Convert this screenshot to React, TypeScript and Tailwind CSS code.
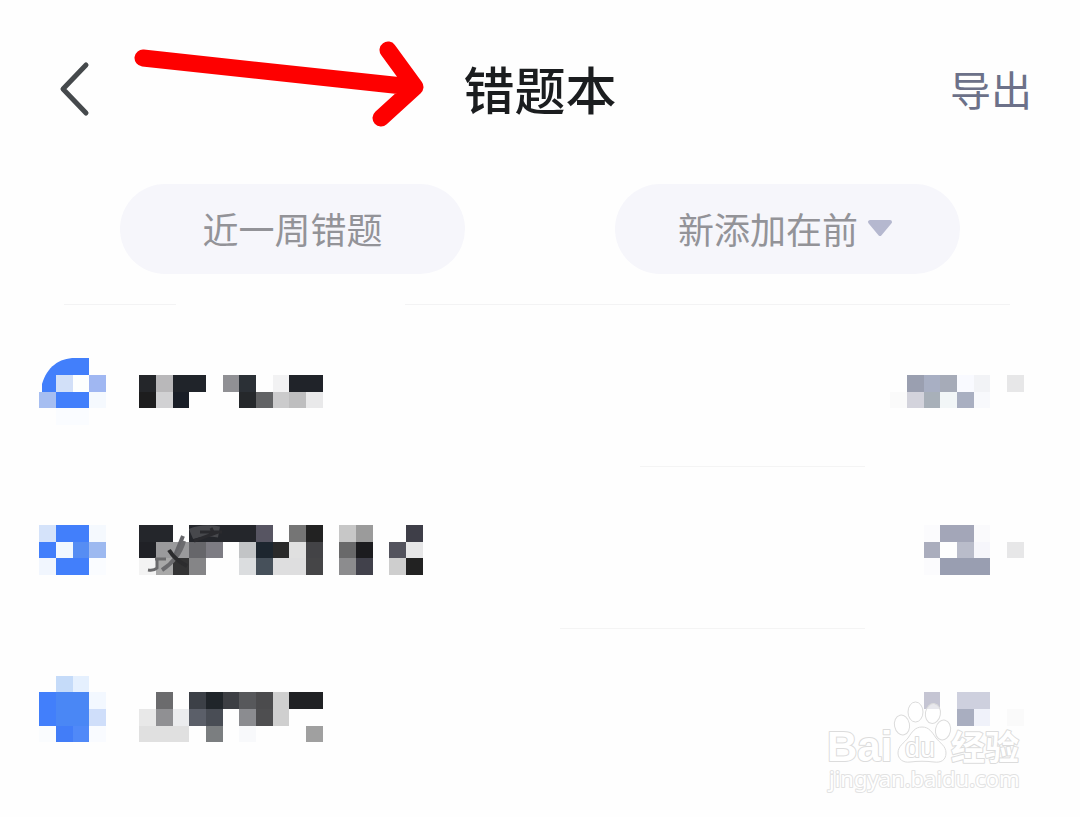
interface Block {
  x: number
  y: number
  w?: number
  h?: number
  color: string
}

interface Entry {
  id: string
  top: number
  divider?: string
  icon: Block[]
  name: Block[]
  count: Block[]
  smudge?: boolean
}

const CELL = 50 / 3

const entries: Entry[] = [
  {
    id: 'first',
    top: 22.3,
    divider: 'ml-[640px]',
    icon: [
      { x: 1, y: 1, color: '#d2e0f8' },
      { x: 2, y: 1, color: '#fdfffe' },
      { x: 3, y: 1, color: '#a0b7f2' },
      { x: 0, y: 2, color: '#a6bef1' },
      { x: 1, y: 2, w: 2, color: '#427ffb' },
      { x: 3, y: 2, color: '#f5f9fe' },
      { x: 1, y: 3, w: 2, color: '#fafcff' },
    ],
    name: [
      { x: 0, y: 1, color: '#24262a' },
      { x: 1, y: 1, color: '#b9b8ba' },
      { x: 2, y: 1, w: 2, color: '#20242a' },
      { x: 0, y: 2, color: '#1d1d1e' },
      { x: 1, y: 2, color: '#d1d1d3' },
      { x: 2, y: 2, color: '#191e27' },
      { x: 5, y: 1, color: '#909094' },
      { x: 6, y: 1, color: '#2b3036' },
      { x: 8, y: 1, color: '#f2f2f3' },
      { x: 9, y: 1, w: 2, color: '#202329' },
      { x: 6, y: 2, color: '#25282b' },
      { x: 7, y: 2, color: '#626365' },
      { x: 8, y: 2, color: '#cbcbcc' },
      { x: 9, y: 2, color: '#bebebf' },
      { x: 10, y: 2, color: '#e9e9ea' },
    ],
    count: [
      { x: 1, y: 1, color: '#9a9fb0' },
      { x: 2, y: 1, color: '#a8afc3' },
      { x: 3, y: 1, color: '#a6abb8' },
      { x: 4, y: 1, color: '#f9faff' },
      { x: 5, y: 1, color: '#f2f3f6' },
      { x: 7, y: 1, color: '#e7e7e8' },
      { x: 0, y: 2, color: '#fafafa' },
      { x: 1, y: 2, color: '#d3d3dc' },
      { x: 2, y: 2, color: '#a8b0b9' },
      { x: 3, y: 2, color: '#f2f6f7' },
      { x: 4, y: 2, color: '#a9afc1' },
      { x: 5, y: 2, color: '#f8f9fc' },
    ],
  },
  {
    id: 'second',
    top: 27,
    divider: 'ml-[560px]',
    smudge: true,
    icon: [
      { x: 0, y: 0, color: '#d5e3fa' },
      { x: 1, y: 0, w: 2, color: '#427ffb' },
      { x: 3, y: 0, color: '#f5f9fe' },
      { x: 0, y: 1, color: '#427ffb' },
      { x: 1, y: 1, color: '#f1f8ff' },
      { x: 2, y: 1, color: '#568df3' },
      { x: 3, y: 1, color: '#9db9f0' },
      { x: 0, y: 2, color: '#f1f6fe' },
      { x: 1, y: 2, w: 2, color: '#427ffb' },
      { x: 3, y: 2, color: '#fafcff' },
    ],
    name: [
      { x: 0, y: 0, w: 2, color: '#24262b' },
      { x: 3, y: 0, w: 4, color: '#24262b' },
      { x: 7, y: 0, color: '#575562' },
      { x: 9, y: 0, color: '#757575' },
      { x: 10, y: 0, color: '#222222' },
      { x: 0, y: 1, color: '#202126' },
      { x: 1, y: 1, w: 2, color: '#9a9a9c' },
      { x: 3, y: 1, color: '#66666a' },
      { x: 4, y: 1, color: '#7d7c83' },
      { x: 6, y: 1, color: '#c2c4c6' },
      { x: 7, y: 1, color: '#1d262f' },
      { x: 8, y: 1, color: '#2a2a2a' },
      { x: 9, y: 1, color: '#e0e0e0' },
      { x: 10, y: 1, color: '#434346' },
      { x: 0, y: 2, color: '#f3f3f3' },
      { x: 1, y: 2, color: '#a8a8a8' },
      { x: 2, y: 2, color: '#333334' },
      { x: 3, y: 2, color: '#858587' },
      { x: 6, y: 2, color: '#dbdddf' },
      { x: 7, y: 2, color: '#46505a' },
      { x: 8, y: 2, w: 2, color: '#dededf' },
      { x: 10, y: 2, color: '#454547' },
      { x: 12, y: 0, color: '#c7c7c7' },
      { x: 13, y: 0, color: '#9b9b9b' },
      { x: 16, y: 0, color: '#3e3e48' },
      { x: 12, y: 1, color: '#69696a' },
      { x: 13, y: 1, color: '#1c1c1f' },
      { x: 15, y: 1, color: '#53535d' },
      { x: 16, y: 1, color: '#e6e6e7' },
      { x: 12, y: 2, color: '#8c8c8e' },
      { x: 13, y: 2, color: '#41414b' },
      { x: 15, y: 2, color: '#cecece' },
      { x: 16, y: 2, color: '#222222' },
    ],
    count: [
      { x: 2, y: 0, color: '#fbfbfd' },
      { x: 3, y: 0, w: 2, color: '#a3a6b8' },
      { x: 5, y: 0, color: '#fafafc' },
      { x: 2, y: 1, color: '#aaadbd' },
      { x: 4, y: 1, color: '#b9bcca' },
      { x: 5, y: 1, color: '#f6f6fb' },
      { x: 7, y: 1, color: '#e7e7e8' },
      { x: 2, y: 2, color: '#fbfbfd' },
      { x: 3, y: 2, w: 3, color: '#999eb1' },
    ],
  },
  {
    id: 'third',
    top: 15.7,
    icon: [
      { x: 1, y: 0, color: '#c5dbf9' },
      { x: 2, y: 0, color: '#e5f0fe' },
      { x: 0, y: 1, color: '#427ffb' },
      { x: 1, y: 1, w: 2, color: '#4a87f5' },
      { x: 3, y: 1, color: '#f3f8ff' },
      { x: 0, y: 2, color: '#427ffb' },
      { x: 1, y: 2, w: 2, color: '#4a87f5' },
      { x: 3, y: 2, color: '#cfdefa' },
      { x: 0, y: 3, color: '#fafcfe' },
      { x: 1, y: 3, color: '#427df8' },
      { x: 2, y: 3, color: '#5089f8' },
      { x: 3, y: 3, color: '#f9fbff' },
    ],
    name: [
      { x: 1, y: 1, color: '#6b6b6d' },
      { x: 3, y: 1, color: '#3c4047' },
      { x: 4, y: 1, color: '#20252a' },
      { x: 5, y: 1, color: '#3d3f44' },
      { x: 6, y: 1, color: '#57585b' },
      { x: 7, y: 1, color: '#4b4b4d' },
      { x: 8, y: 1, h: 2, color: '#cfcfcf' },
      { x: 9, y: 1, w: 2, color: '#202124' },
      { x: 0, y: 2, color: '#e8e8e8' },
      { x: 1, y: 2, color: '#909093' },
      { x: 2, y: 2, color: '#ebecee' },
      { x: 3, y: 2, color: '#5b5f69' },
      { x: 4, y: 2, color: '#494d55' },
      { x: 6, y: 2, color: '#8b8c90' },
      { x: 7, y: 2, color: '#4e4e50' },
      { x: 0, y: 3, w: 3, color: '#e0e0e0' },
      { x: 4, y: 3, color: '#7b7e80' },
      { x: 6, y: 3, color: '#f8f9fb' },
      { x: 10, y: 3, color: '#a0a0a0' },
    ],
    count: [
      { x: 2, y: 1, color: '#c5c5d3' },
      { x: 4, y: 1, w: 2, color: '#ced0de' },
      { x: 4, y: 2, color: '#a9aec0' },
      { x: 5, y: 2, color: '#f0f2fa' },
      { x: 7, y: 2, color: '#fafafa' },
    ],
  },
]

function Blocks({ blocks, top }: { blocks: Block[]; top: number }) {
  return (
    <g shapeRendering="crispEdges" transform={`translate(0.3 ${top})`}>
      {blocks.map(({ x, y, w = 1, h = 1, color }) => (
        <rect
          key={`${x}-${y}`}
          x={x * CELL}
          y={y * CELL}
          width={w * CELL}
          height={h * CELL}
          fill={color}
        />
      ))}
    </g>
  )
}

function EntryRow({ entry }: { entry: Entry }) {
  return (
    <li>
      <div className="flex h-[161px] items-start pt-[31px] pr-14 pl-[39px]">
        <svg className="h-[100px] w-[100px] shrink-0" viewBox="0 0 100 100" aria-hidden="true">
          {entry.id === 'first' && (
            <path d="M3 56V48C8 31 20 22 36 22H50V56Z" fill="#427ffb" />
          )}
          <Blocks blocks={entry.icon} top={entry.top} />
        </svg>
        <svg className="h-[100px] w-[300px] shrink-0" viewBox="0 0 300 100" aria-hidden="true">
          <Blocks blocks={entry.name} top={entry.top} />
          {entry.smudge && (
            <g fill="none">
              <path d="M52 36q12-5 28-2" stroke="#6a6a6e" strokeWidth="11" opacity="0.5" />
              <path d="M55 43l24-9M72 30l3 6M61 34h22" stroke="#2a2a2e" strokeWidth="3" />
              <path d="M44 38l-9 22" stroke="#66666a" strokeWidth="4" />
              <path d="M45 43q-5 18-22 29" stroke="#6b6b6e" strokeWidth="4" />
              <path d="M30 52q6 10 18 16" stroke="#2c2c2e" strokeWidth="4" />
              <path d="M16 61h11M18 62v8q-3 3-9 2" stroke="#6a6a6c" strokeWidth="3" />
            </g>
          )}
        </svg>
        <svg className="ml-auto h-[100px] w-[134px] shrink-0" viewBox="0 0 134 100" aria-hidden="true">
          <Blocks blocks={entry.count} top={entry.top} />
        </svg>
      </div>
      {entry.divider && <div className={`mr-[215px] h-px bg-[#f4f4f4] ${entry.divider}`} />}
    </li>
  )
}

function Watermark() {
  return (
    <svg
      className="pointer-events-none absolute top-[695px] right-[50px] h-[105px] w-[210px]"
      viewBox="820 695 210 105"
      fill="#ffffff"
      stroke="#dcdcdc"
      strokeWidth="2"
      strokeLinejoin="round"
    >
      <g fillOpacity="0.6" strokeWidth="1">
        <ellipse cx="902" cy="725" rx="7.5" ry="10" transform="rotate(-12 902 725)" />
        <ellipse cx="915.5" cy="712" rx="7.5" ry="10" />
        <ellipse cx="933" cy="713.5" rx="7.5" ry="10" transform="rotate(10 933 713)" />
        <ellipse cx="943" cy="730" rx="7.5" ry="10" transform="rotate(12 943 730)" />
      </g>
      <path
        strokeWidth="1"
        d="M922 727c7 0 10 5 14 11 4 5 10 8 10 15 0 7-5 10-12 9-8-1-16-1-24 0-7 1-12-3-12-9 0-7 6-10 10-15 4-6 7-11 14-11z"
      />
      <g style={{ paintOrder: 'stroke' }}>
        <text x="827" y="761" className="font-['Liberation_Sans',sans-serif] text-[42px] font-bold">
          Bai
        </text>
        <text x="905" y="757" className="font-['Liberation_Sans',sans-serif] text-[27px]">
          du
        </text>
        <text
          x="951"
          y="760"
          className="font-['Noto_Sans_CJK_SC',sans-serif] text-[34px] font-bold"
        >
          经验
        </text>
        <text
          x="829"
          y="787"
          className="font-['Noto_Sans',sans-serif] text-[22px]"
          stroke="#e2e2e2"
        >
          jingyan.baidu.com
        </text>
      </g>
    </svg>
  )
}

export default function App() {
  return (
    <div className="relative min-h-screen bg-[#fefefe] font-['Noto_Sans_CJK_SC',sans-serif]">
      <header className="grid grid-cols-3 items-center px-12 pt-[50px]">
        <button type="button" aria-label="返回" className="h-20 w-14 justify-self-start">
          <svg viewBox="0 0 56 80" className="h-20 w-14" fill="none">
            <path
              d="M38 15L15 39L38 63"
              stroke="#45494c"
              strokeWidth="5"
              strokeLinecap="round"
              strokeLinejoin="round"
            />
          </svg>
        </button>
        <h1 className="pb-1 text-center text-[51px] leading-19 font-medium text-[#1b1d1f]">
          错题本
        </h1>
        <button
          type="button"
          className="justify-self-end pb-1 text-[41px] leading-19 text-[#6c7189]"
        >
          导出
        </button>
      </header>

      <div className="flex justify-between px-[120px] pt-[54px]">
        <button
          type="button"
          className="h-[90px] w-[345px] rounded-full bg-[#f6f6fb] pb-0.5 text-4xl text-[#939398]"
        >
          近一周错题
        </button>
        <label className="flex h-[90px] w-[345px] items-center justify-center gap-2 rounded-full bg-[#f6f6fb] pb-0.5">
          <select
            aria-label="排序"
            className="appearance-none bg-transparent text-4xl text-[#939398] outline-none"
          >
            <option>新添加在前</option>
          </select>
          <svg viewBox="0 0 30 20" className="h-5 w-[30px]" aria-hidden="true">
            <path
              d="M3 4H23L13 16Z"
              fill="#b5b8cf"
              stroke="#b5b8cf"
              strokeWidth="4"
              strokeLinejoin="round"
            />
          </svg>
        </label>
      </div>

      <main className="pt-[30px]">
        <div className="flex justify-between pr-[70px] pl-16">
          <div className="h-px w-28 bg-[#f3f3f4]" />
          <div className="ml-[229px] h-px flex-1 bg-[#f3f3f4]" />
        </div>
        <ul>
          {entries.map((entry) => (
            <EntryRow key={entry.id} entry={entry} />
          ))}
        </ul>
      </main>

      <svg
        className="pointer-events-none absolute top-[30px] left-[120px] h-[110px] w-[320px]"
        viewBox="120 30 320 110"
        fill="none"
        stroke="#fe0000"
        strokeWidth="17"
        strokeLinecap="round"
        strokeLinejoin="round"
        aria-hidden="true"
      >
        <path d="M143 58L412 87M388 50L415 87L381 118" />
      </svg>
      <Watermark />
    </div>
  )
}
